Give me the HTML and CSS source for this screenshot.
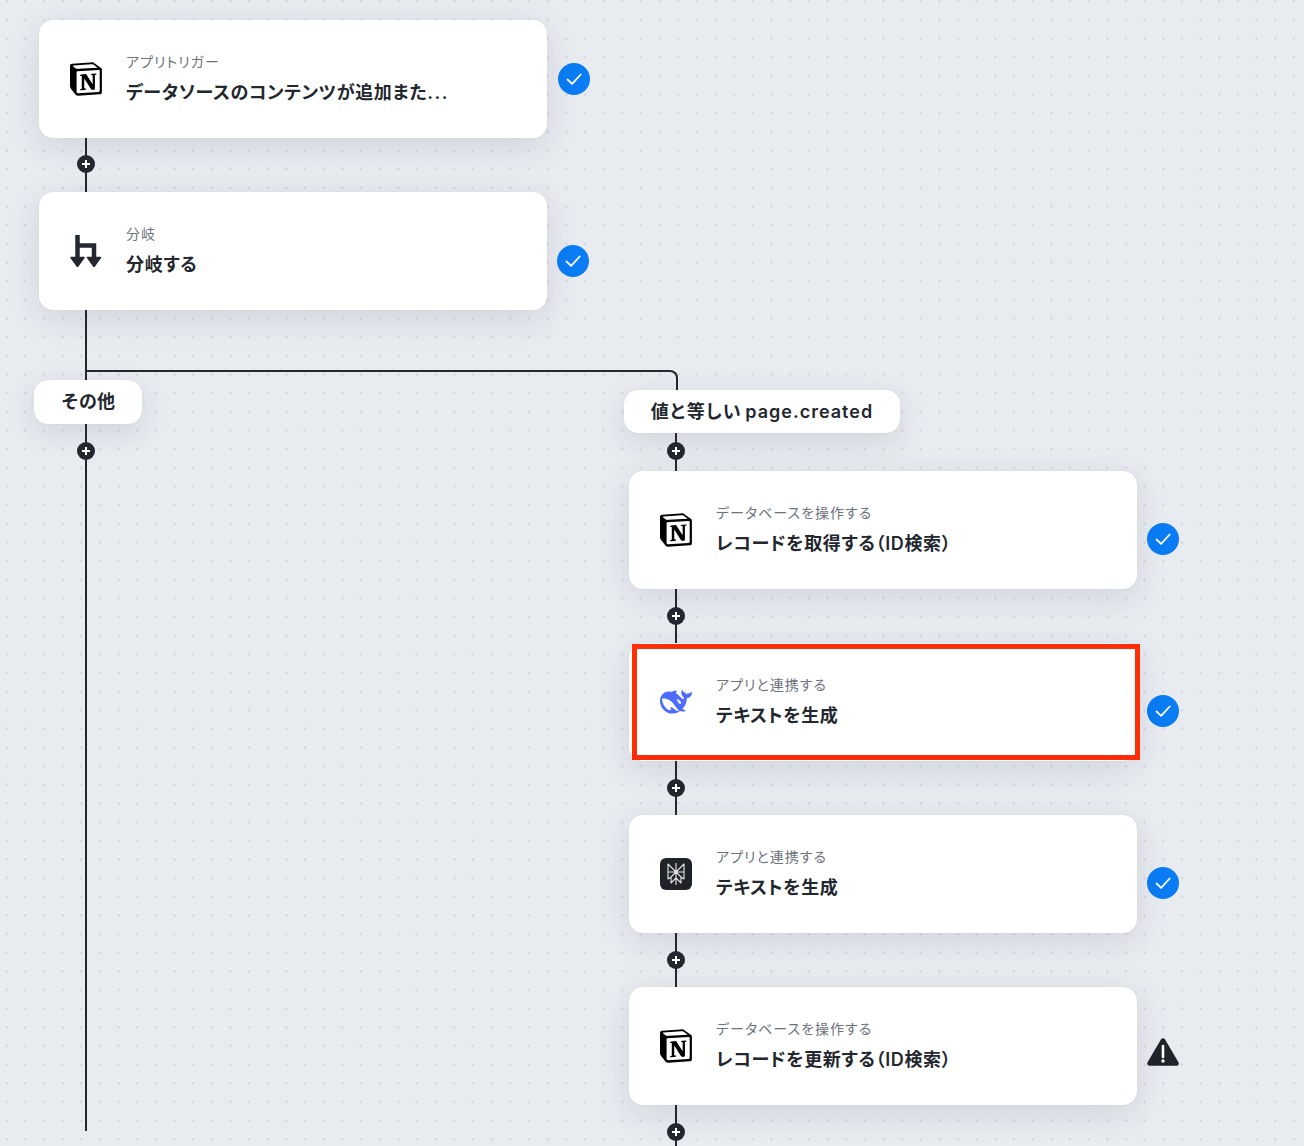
FILE: index.html
```html
<!DOCTYPE html>
<html lang="ja">
<head>
    <meta charset="UTF-8">
    <meta name="viewport" content="width=device-width, initial-scale=1.0">
    <title>フロー</title>
    <link rel="stylesheet" href="styles.css">
</head>
<body>
    <svg class="defs" width="0" height="0">
        <defs>
            <symbol id="notion" viewBox="0 0 96 100">
                <path fill="#fff" d="M6.017 4.313l55.333-4.087c6.797-.583 8.543-.19 12.817 2.917l17.663 12.443c2.913 2.14 3.883 2.723 3.883 5.053v68.243c0 4.277-1.553 6.807-6.99 7.193L24.467 99.967c-4.08.193-6.023-.39-8.16-3.113L3.3 79.94C.967 76.827 0 74.497 0 71.773V11.113c0-3.497 1.553-6.413 6.017-6.8z"/>
                <path fill="#000" fill-rule="evenodd" d="M61.35.227L6.017 4.314C1.553 4.7 0 7.617 0 11.113v60.66c0 2.723.967 5.053 3.3 8.167l13.007 16.913c2.137 2.723 4.08 3.307 8.16 3.113l64.257-3.89c5.433-.387 6.99-2.917 6.99-7.193V20.64c0-2.21-.873-2.847-3.443-4.733L74.167 3.143C69.894.036 68.147-.357 61.35.226zM25.92 19.523c-5.247.353-6.437.433-9.417-1.99L8.927 11.507c-.77-.78-.383-1.753 1.557-1.947l53.193-3.887c4.467-.39 6.793 1.167 8.54 2.527l9.123 6.61c.39.197 1.36 1.36.193 1.36l-54.933 3.307-.68.047zM19.803 88.3V30.367c0-2.53.777-3.697 3.103-3.893L86 22.78c2.14-.193 3.107 1.167 3.107 3.693v57.547c0 2.53-.39 4.67-3.883 4.863l-60.377 3.5c-3.493.193-5.043-.97-5.043-4.083zm59.6-54.827c.387 1.75 0 3.5-1.75 3.7l-2.91.577v42.773c-2.527 1.36-4.853 2.137-6.797 2.137-3.107 0-3.883-.973-6.21-3.887l-19.03-29.94v28.967l6.02 1.363s0 3.5-4.857 3.5l-13.39.777c-.39-.78 0-2.723 1.357-3.11l3.497-.97v-38.3L30.48 40.667c-.39-1.75.58-4.277 3.3-4.473l14.367-.967 19.8 30.327v-26.83l-5.047-.58c-.39-2.143 1.163-3.7 3.103-3.89l13.4-.78z"/>
            </symbol>
            <symbol id="ok" viewBox="0 0 32 32">
                <circle cx="16" cy="16" r="16" fill="#0a7cf4"/>
                <path d="M9.5 16.5l4.6 4.4 8.6-9.4" fill="none" stroke="#fff" stroke-width="1.8" stroke-linecap="round" stroke-linejoin="round"/>
            </symbol>
        </defs>
    </svg>

    <div class="canvas">
        <div class="branch-line"></div>

        <!-- left side -->
        <div class="col col-left">
            <div class="node">
                <div class="card">
                    <svg class="icon icon-notion"><use href="#notion"/></svg>
                    <div class="card-text">
                        <div class="card-sub">アプリトリガー</div>
                        <div class="card-title">データソースのコンテンツが追加また<span class="dots">...</span></div>
                    </div>
                </div>
                <svg class="status status-top"><use href="#ok"/></svg>
            </div>
            <div class="link link-up"><span class="plus"></span></div>
            <div class="node">
                <div class="card">
                    <svg class="icon" viewBox="0 0 32 32">
                        <path d="M7.500 0v23M7.500 10.500h16.500V23" fill="none" stroke="#23272e" stroke-width="4.500"/>
                        <path d="M1 22.500h13L7.500 31.500zM17.500 22.500h13L24 31.500z" fill="#23272e" stroke="#23272e" stroke-width="1.500" stroke-linejoin="round"/>
                    </svg>
                    <div class="card-text">
                        <div class="card-sub">分岐</div>
                        <div class="card-title">分岐する</div>
                    </div>
                </div>
                <svg class="status"><use href="#ok"/></svg>
            </div>
            <div class="link link-trunk"></div>
            <div class="pill pill-other">その他</div>
            <div class="link link-long"><span class="plus"></span></div>
        </div>

        <!-- right side -->
        <div class="col col-right">
            <div class="pill pill-value">値と等しい <span class="latin">page.created</span></div>
            <div class="link link-short link-up"><span class="plus"></span></div>
            <div class="node">
                <div class="card">
                    <svg class="icon icon-notion"><use href="#notion"/></svg>
                    <div class="card-text">
                        <div class="card-sub">データベースを操作する</div>
                        <div class="card-title">レコードを取得する（ID検索）</div>
                    </div>
                </div>
                <svg class="status status-right"><use href="#ok"/></svg>
            </div>
            <div class="link"><span class="plus"></span></div>
            <div class="node">
                <div class="card">
                    <svg class="icon icon-whale" viewBox="0 0 24 24">
                        <path fill="#4d6bfe" d="M23.748 4.482c-.254-.124-.364.113-.512.234-.051.039-.094.09-.137.136-.372.397-.806.657-1.373.626-.829-.046-1.537.214-2.163.848-.133-.782-.575-1.248-1.247-1.548-.352-.156-.708-.311-.955-.65-.172-.241-.219-.51-.305-.774-.055-.16-.11-.323-.293-.35-.2-.031-.278.136-.356.276-.313.572-.434 1.202-.422 1.84.027 1.436.633 2.58 1.838 3.393.137.093.172.187.129.323-.082.28-.18.552-.266.833-.055.179-.137.217-.329.14a5.526 5.526 0 01-1.736-1.18c-.857-.828-1.631-1.742-2.597-2.458a11.365 11.365 0 00-.689-.471c-.985-.957.13-1.743.388-1.836.27-.098.093-.432-.779-.428-.872.004-1.67.295-2.687.684a3.055 3.055 0 01-.465.137 9.597 9.597 0 00-2.883-.102c-1.885.21-3.39 1.102-4.497 2.623C.082 8.606-.231 10.684.152 12.85c.403 2.284 1.569 4.175 3.36 5.653 1.858 1.533 3.997 2.284 6.438 2.14 1.482-.085 3.133-.284 4.994-1.86.47.234.962.327 1.78.397.63.059 1.236-.03 1.705-.128.735-.156.684-.837.419-.961-2.155-1.004-1.682-.595-2.113-.926 1.096-1.296 2.746-2.642 3.392-7.003.05-.347.007-.565 0-.845-.004-.17.035-.237.23-.256a4.173 4.173 0 001.545-.475c1.396-.763 1.96-2.015 2.093-3.517.02-.23-.004-.467-.247-.588zM11.581 18c-2.089-1.642-3.102-2.183-3.52-2.16-.392.024-.321.471-.235.763.09.288.207.486.371.739.114.167.192.416-.113.603-.673.416-1.842-.14-1.897-.167-1.361-.802-2.5-1.86-3.301-3.307-.774-1.393-1.224-2.887-1.298-4.482-.02-.386.093-.522.477-.592a4.696 4.696 0 011.529-.039c2.132.312 3.946 1.265 5.468 2.774.868.86 1.525 1.887 2.202 2.891.72 1.066 1.494 2.082 2.48 2.914.348.292.625.514.891.677-.802.09-2.14.11-3.054-.614zm1-6.44a.306.306 0 01.415-.287.302.302 0 01.2.288.306.306 0 01-.31.307.303.303 0 01-.304-.308zm3.11 1.596c-.2.081-.399.151-.59.16a1.245 1.245 0 01-.798-.254c-.274-.23-.47-.358-.552-.758a1.73 1.73 0 01.016-.588c.07-.327-.008-.537-.239-.727-.187-.156-.426-.199-.688-.199a.559.559 0 01-.254-.078c-.11-.054-.2-.19-.114-.358.028-.054.16-.186.192-.21.356-.202.767-.136 1.146.016.352.144.618.408 1.001.782.391.451.462.576.685.914.176.265.336.537.445.848.067.195-.019.354-.25.452z"/>
                    </svg>
                    <div class="card-text">
                        <div class="card-sub">アプリと連携する</div>
                        <div class="card-title">テキストを生成</div>
                    </div>
                </div>
                <svg class="status status-right"><use href="#ok"/></svg>
                <div class="highlight"></div>
            </div>
            <div class="link"><span class="plus"></span></div>
            <div class="node">
                <div class="card">
                    <svg class="icon" viewBox="0 0 32 32">
                        <rect width="32" height="32" rx="6" fill="#1f2226"/>
                        <path d="M16 5v22M8 6l8 8 8-8v8H8zM8 14v7l3-2 5-5M24 14v7l-3-2-5-5M11 19v6l5-5M21 19v6l-5-5" fill="none" stroke="#e8e8e8" stroke-width="1.100" stroke-linejoin="round"/>
                    </svg>
                    <div class="card-text">
                        <div class="card-sub">アプリと連携する</div>
                        <div class="card-title">テキストを生成</div>
                    </div>
                </div>
                <svg class="status status-right"><use href="#ok"/></svg>
            </div>
            <div class="link"><span class="plus"></span></div>
            <div class="node">
                <div class="card">
                    <svg class="icon icon-notion"><use href="#notion"/></svg>
                    <div class="card-text">
                        <div class="card-sub">データベースを操作する</div>
                        <div class="card-title">レコードを更新する（ID検索）</div>
                    </div>
                </div>
                <svg class="status status-warn" viewBox="0 0 32 30">
                    <path d="M16 3.500L29.500 26.500H2.500z" fill="#20252c" stroke="#20252c" stroke-width="4.500" stroke-linejoin="round"/>
                    <path d="M16 9v11" stroke="#fff" stroke-width="2.600" stroke-linecap="round"/>
                    <circle cx="16" cy="24" r="1.700" fill="#fff"/>
                </svg>
            </div>
            <div class="link"><span class="plus"></span></div>
        </div>
    </div>
</body>
</html>
```

FILE: styles.css
```css
body {
    margin: 0;
    font-family: Inter, "Noto Sans CJK JP", sans-serif;
    color: #23272e;
}
.defs {
    position: absolute;
}
.canvas {
    position: relative;
    display: flex;
    box-sizing: border-box;
    height: 1146px;
    padding: 20px 0 0 39px;
    overflow: hidden;
    background-color: #e8ebf0;
    background-image: radial-gradient(circle, #d2d5dc 1px, transparent 1.4px);
    background-size: 18.67px 18.67px;
    background-position: -2.7px -8px;
}
.col-left {
    width: 590px;
    flex-shrink: 0;
}
.col-right {
    padding-top: 370px;
}
.branch-line {
    position: absolute;
    left: 86px;
    top: 370px;
    box-sizing: border-box;
    width: 592px;
    height: 24px;
    border-top: 2px solid #23272e;
    border-right: 2px solid #23272e;
    border-top-right-radius: 8px;
}
.node {
    position: relative;
    display: flex;
    align-items: flex-start;
}
.card {
    position: relative;
    display: flex;
    align-items: center;
    gap: 24px;
    box-sizing: border-box;
    width: 508px;
    height: 118px;
    padding-left: 31px;
    background-color: #fff;
    border-radius: 14px;
    box-shadow: 0 8px 32px rgba(40, 50, 70, 0.12), 0 0 1px rgba(40, 50, 70, 0.15);
}
.icon {
    width: 32px;
    height: 32px;
    flex-shrink: 0;
}
.icon-notion {
    height: 34px;
}
.icon-whale {
    margin-top: -1px;
}
.card-text {
    margin-bottom: 2px;
    font-feature-settings: "palt";
}
.card-sub {
    font-size: 14px;
    line-height: 20px;
    letter-spacing: 1px;
    color: #6c727c;
}
.card-title {
    margin-top: 9px;
    font-size: 18px;
    line-height: 24px;
    letter-spacing: 0.65px;
    font-weight: 600;
}
.dots {
    letter-spacing: 1.5px;
}
.status {
    width: 32px;
    height: 32px;
    margin: 53px 0 0 10px;
    flex-shrink: 0;
}
.status-top {
    margin: 43px 0 0 11px;
}
.status-right {
    margin-top: 52px;
}
.status-warn {
    height: 30px;
    margin-top: 50px;
}
.highlight {
    position: absolute;
    left: 3px;
    top: 1px;
    box-sizing: border-box;
    width: 508px;
    height: 116px;
    border: 5px solid #ff2d06;
}
.link {
    display: flex;
    align-items: center;
    justify-content: center;
    width: 2px;
    height: 54px;
    margin-left: 46px;
    background-color: #23272e;
}
.link-trunk {
    height: 70px;
}
.link-short {
    height: 38px;
}
.link-long {
    height: 707px;
    align-items: flex-start;
}
.link-long .plus {
    margin-top: 18px;
}
.plus {
    position: relative;
    flex-shrink: 0;
    width: 18px;
    height: 18px;
    background-color: #23272e;
    border-radius: 50%;
}
.link-up .plus {
    margin-top: -2px;
}
.plus::before,
.plus::after {
    content: "";
    position: absolute;
    left: 5px;
    top: 8px;
    width: 8px;
    height: 2px;
    background-color: #fff;
}
.plus::after {
    left: 8px;
    top: 5px;
    width: 2px;
    height: 8px;
}
.pill {
    position: relative;
    box-sizing: border-box;
    margin-left: -5px;
    font-size: 18px;
    font-weight: 600;
    text-align: center;
    background-color: #fff;
    border-radius: 14px;
    box-shadow: 0 8px 28px rgba(40, 50, 70, 0.12), 0 0 1px rgba(40, 50, 70, 0.15);
}
.pill-other {
    width: 108px;
    height: 44px;
    line-height: 44px;
}
.pill-value {
    width: 276px;
    height: 43px;
    line-height: 43px;
}
.latin {
    letter-spacing: 1px;
}
```
